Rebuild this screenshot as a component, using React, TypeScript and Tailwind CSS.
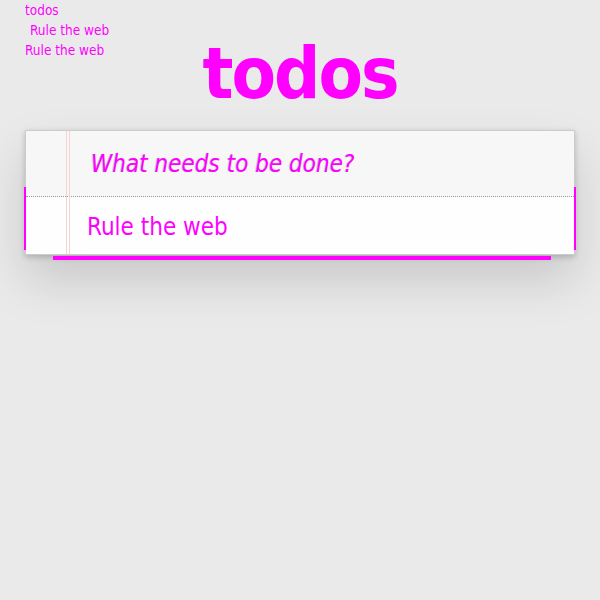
import { useState } from "react";

const TODOS = [{ id: 1, title: "Rule the web" }];

export default function App()
{
  const [text, setText] = useState("");
  return (
    <div className="min-h-[600px] bg-[#eaeaea] font-['DejaVu_Sans_Condensed','DejaVu_Sans',sans-serif] text-[#ff00ff]">
      <header className="grid grid-cols-[1fr_auto_1fr] items-start">
        {/* stray labels */}
        <div className="flex flex-col pl-[25px] text-[13.5px] leading-[20px]">
          <span>todos</span>
          <span className="pl-[5px]">Rule the web</span>
          <span>Rule the web</span>
        </div>
        <h1 className="pt-[37px] text-center text-[72px] font-bold leading-[72px] tracking-[-2px]">todos</h1>
        <div />
      </header>

      <section className="relative mx-auto mt-[21px] w-[550px]">
        <div className="relative border border-[#cccccc] bg-[#fefefe] shadow-[0_2px_6px_0_rgba(0,0,0,0.2),0_25px_50px_0_rgba(0,0,0,0.15)]">
          <div className="pointer-events-none absolute top-0 bottom-0 left-[40px] w-[4px] border-x border-[#f3d3d3]" />
          <div className="h-[66px] border-b border-dotted border-[#999999] bg-[#f7f7f7]">
            <input
              value={text}
              onChange={(e) => setText(e.target.value)}
              placeholder="What needs to be done?"
              className="h-full w-full bg-transparent pl-[65px] text-[24px] italic outline-none placeholder:text-[#ff00ff] [text-shadow:-1px_0_0_#c4c4c4] font-['DejaVu_Sans_Condensed','DejaVu_Sans',sans-serif]"
            />
          </div>
          <ul>
            {TODOS.map((t) => (
              <li key={t.id} className="flex h-[57px] items-center pl-[61px] pt-[3px] text-[24px]">
                {t.title}
              </li>
            ))}
          </ul>
        </div>
        {/* magenta artifacts */}
        <div className="absolute left-[-1px] top-[57px] h-[63px] w-[2px] bg-[#ff00ff]" />
        <div className="absolute right-[-1px] top-[57px] h-[63px] w-[2px] bg-[#ff00ff]" />
        <div className="absolute left-[28px] right-[24px] top-[126px] h-[4px] bg-[#ff00ff]" />
      </section>
    </div>
  );
}
